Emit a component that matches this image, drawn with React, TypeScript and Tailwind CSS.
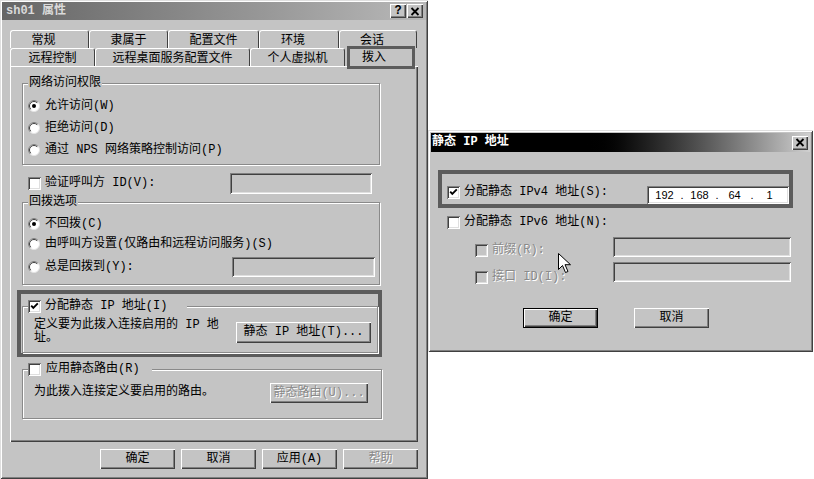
import type { ReactNode } from "react";

const FACE = "bg-[#c4c4c4]";
const RAISED =
  "shadow-[inset_1px_1px_0_#fff,inset_-1px_-1px_0_#404040,inset_-2px_-2px_0_#808080]";
const SUNKEN =
  "shadow-[inset_1px_1px_0_#808080,inset_-1px_-1px_0_#fff,inset_2px_2px_0_#404040,inset_-2px_-2px_0_#dfdfdf]";
const WINDOW =
  "shadow-[inset_1px_1px_0_#dfdfdf,inset_-1px_-1px_0_#404040,inset_2px_2px_0_#fff,inset_-2px_-2px_0_#808080]";
const DISABLED = "text-[#8a8a8a] [text-shadow:1px_1px_0_#fff]";

interface TabDef {
  label: string;
  width: string;
  short?: boolean;
}

const TOP_TABS: TabDef[] = [
  { label: "常规", width: "w-[79px]", short: true },
  { label: "隶属于", width: "w-[79px]" },
  { label: "配置文件", width: "w-[91px]" },
  { label: "环境", width: "w-[80px]", short: true },
  { label: "会话", width: "w-[78px]", short: true },
];

const FRONT_TABS: TabDef[] = [
  { label: "远程控制", width: "w-[85px]" },
  { label: "远程桌面服务配置文件", width: "w-[155px]" },
  { label: "个人虚拟机", width: "w-[95px]" },
];

function Check({ checked = false, disabled = false }: { checked?: boolean; disabled?: boolean }) {
  return (
    <span
      className={`relative block h-[13px] w-[13px] shrink-0 ${disabled ? "bg-[#c4c4c4]" : "bg-white"} ${SUNKEN}`}
    >
      {checked && (
        <svg className="absolute left-0 top-0" width="13" height="13" viewBox="0 0 13 13">
          <path d="M3.2 5.6 5.3 7.8 9.8 3.3" fill="none" stroke="#000" strokeWidth="1.9" />
        </svg>
      )}
    </span>
  );
}

function Radio({ checked = false }: { checked?: boolean }) {
  return (
    <svg className="shrink-0" width="12" height="12" viewBox="0 0 12 12">
      <circle cx="6" cy="6" r="5.5" fill="#fff" stroke="#e4e4e4" />
      <path d="M2.1 9.9A5.5 5.5 0 0 1 9.9 2.1" fill="none" stroke="#808080" />
      <path d="M2.8 9.2A4.5 4.5 0 0 1 9.2 2.8" fill="none" stroke="#404040" />
      {checked && <circle cx="6" cy="6" r="2" fill="#000" />}
    </svg>
  );
}

function Button({
  children,
  className = "",
  disabled = false,
  primary = false,
}: {
  children: ReactNode;
  className?: string;
  disabled?: boolean;
  primary?: boolean;
}) {
  return (
    <div
      className={`flex items-center justify-center ${FACE} ${RAISED} ${disabled ? DISABLED : ""} ${primary ? "border border-black" : ""} ${className}`}
    >
      {children}
    </div>
  );
}

function Field({ className = "", white = false, children }: { className?: string; white?: boolean; children?: ReactNode }) {
  return <div className={`${white ? "bg-white" : "bg-[#c4c4c4]"} ${SUNKEN} ${className}`}>{children}</div>;
}

function Group({
  legend,
  legendClass = "px-[1px]",
  className = "",
  children,
}: {
  legend: ReactNode;
  legendClass?: string;
  className?: string;
  children?: ReactNode;
}) {
  return (
    <fieldset className={`border border-[#8a8a8a] shadow-[inset_1px_1px_0_#fff,1px_1px_0_#fff] ${className}`}>
      <legend className={`ml-[5px] leading-[13px] ${FACE} ${legendClass}`}>{legend}</legend>
      {children}
    </fieldset>
  );
}

function CloseGlyph() {
  return (
    <svg width="10" height="9" viewBox="0 0 10 9">
      <path d="M1.5 1 8.5 8M8.5 1 1.5 8" stroke="#000" strokeWidth="1.8" />
    </svg>
  );
}

function Tab({ tab }: { tab: TabDef }) {
  return (
    <div
      className={`flex h-[18px] items-center justify-center rounded-t-[3px] border-l border-r border-t border-l-white border-r-[#404040] border-t-white pt-[3px] ${tab.width} ${tab.short ? "pr-[12px]" : ""}`}
    >
      {tab.label}
    </div>
  );
}

function PropertiesDialog() {
  return (
    <div className={`flex h-[479px] w-[428px] shrink-0 flex-col p-[2px] ${FACE} ${WINDOW}`}>
      <div className="flex h-[18px] items-center bg-linear-to-r from-[#666666] to-[#b8b8b8] pl-[4px] pr-[3px]">
        <span className="font-bold text-[#dadada]">sh01 属性</span>
        <div className="ml-auto flex gap-[1px]">
          <Button className="h-[14px] w-[16px] font-bold">?</Button>
          <Button className="h-[14px] w-[16px]">
            <CloseGlyph />
          </Button>
        </div>
      </div>

      <div className="pl-[8px] pt-[10px]">
        <div className="flex">
          {TOP_TABS.map((tab) => (
            <Tab key={tab.label} tab={tab} />
          ))}
        </div>
        <div className="flex">
          {FRONT_TABS.map((tab) => (
            <Tab key={tab.label} tab={tab} />
          ))}
          <div className="relative z-10 flex h-[18px] w-[70px] items-center justify-center pr-[12px] pt-[2px]">
            拨入
            <div className="absolute -bottom-[3px] -top-[2px] left-[2px] right-0 border-[3px] border-[#5c5c5c]" />
          </div>
        </div>

        <div className={`h-[376px] w-[408px] pl-[12px] pt-[11px] ${RAISED}`}>
          <Group legend="网络访问权限" className="h-[88px] w-[358px]">
            <div className="pl-[5px] pt-[5px]">
              <div className="flex h-[22px] items-center gap-[5px]">
                <Radio checked />
                允许访问(W)
              </div>
              <div className="flex h-[22px] items-center gap-[5px]">
                <Radio />
                拒绝访问(D)
              </div>
              <div className="flex h-[22px] items-center gap-[5px]">
                <Radio />
                通过 NPS 网络策略控制访问(P)
              </div>
            </div>
          </Group>

          <div className="mt-[8px] flex h-[21px] w-[358px] items-center pl-[6px] pr-[8px]">
            <Check />
            <span className="ml-[4px]">验证呼叫方 ID(V):</span>
            <Field className="ml-auto h-[21px] w-[142px]" />
          </div>

          <Group legend="回拨选项" className="mt-[2px] h-[89px] w-[358px]">
            <div className="pl-[5px] pr-[4px] pt-[5px]">
              <div className="flex h-[20px] items-center gap-[5px]">
                <Radio checked />
                不回拨(C)
              </div>
              <div className="flex h-[20px] items-center gap-[5px]">
                <Radio />
                由呼叫方设置(仅路由和远程访问服务)(S)
              </div>
              <div className="flex h-[26px] items-center gap-[5px]">
                <Radio />
                总是回拨到(Y):
                <Field className="ml-auto h-[20px] w-[143px]" />
              </div>
            </div>
          </Group>

          <div className="-ml-[5px] mt-[5px] h-[67px] w-[365px] border-[4px] border-[#5c5c5c]">
            <Group
              legend={
                <span className="flex items-center gap-[4px]">
                  <Check checked />
                  分配静态 IP 地址(I)
                </span>
              }
              legendClass="pr-[20px]"
              className="ml-[1px] mt-[6px] h-[53px] w-[356px]"
            >
              <div className="flex items-start justify-between pl-[11px] pr-[6px]">
                <p className="mt-[6px] w-[190px]">定义要为此拨入连接启用的 IP 地址。</p>
                <Button className="mt-[9px] h-[21px] w-[135px]">静态 IP 地址(T)...</Button>
              </div>
            </Group>
          </div>

          <Group
            legend={
              <span className="flex items-center gap-[5px]">
                <Check />
                应用静态路由(R)
              </span>
            }
            legendClass="pr-[12px]"
            className="mt-[6px] h-[56px] w-[360px]"
          >
            <div className="flex items-start justify-between pl-[11px] pr-[13px]">
              <p className="mt-[10px]">为此拨入连接定义要启用的路由。</p>
              <Button disabled className="mt-[7px] h-[20px] w-[98px]">
                静态路由(U)...
              </Button>
            </div>
          </Group>
        </div>

        <div className="mt-[7px] flex w-[408px] justify-end gap-[6px]">
          <Button className="h-[20px] w-[75px]">确定</Button>
          <Button className="h-[20px] w-[75px]">取消</Button>
          <Button className="h-[20px] w-[75px]">应用(A)</Button>
          <Button disabled className="h-[20px] w-[75px]">
            帮助
          </Button>
        </div>
      </div>
    </div>
  );
}

function StaticIpDialog() {
  return (
    <div className={`relative mt-[130px] flex h-[222px] w-[385px] flex-col p-[3px] ${FACE} ${WINDOW}`}>
      <div className="flex h-[19px] items-center bg-linear-to-r from-black from-40% to-[#d0d0d0] pl-[1px] pr-[2px]">
        <span className="font-bold text-white">静态 IP 地址</span>
        <Button className="ml-auto h-[14px] w-[16px]">
          <CloseGlyph />
        </Button>
      </div>

      <div className="ml-[7px] mt-[18px] flex h-[38px] w-[355px] items-start border-[4px] border-[#5c5c5c] pl-[5px]">
        <div className="mt-[12px] flex items-center gap-[4px]">
          <Check checked />
          分配静态 IPv4 地址(S):
        </div>
        <Field white className="ml-auto mt-[12px] flex h-[18px] w-[142px] items-center pl-[4px] font-['Liberation_Sans',sans-serif] text-[11px]">
          <span className="w-[27px] text-center">192</span>
          <span className="w-[8px] text-center">.</span>
          <span className="w-[27px] text-center">168</span>
          <span className="w-[8px] text-center">.</span>
          <span className="w-[27px] text-center">64</span>
          <span className="w-[8px] text-center">.</span>
          <span className="w-[27px] text-center">1</span>
        </Field>
      </div>

      <div className="ml-[16px] mt-[8px] flex h-[13px] items-center gap-[4px]">
        <Check />
        分配静态 IPv6 地址(N):
      </div>

      <div className="flex items-start pr-[19px]">
        <div className={`ml-[44px] mt-[15px] flex flex-col gap-[14px] ${DISABLED}`}>
          <div className="flex h-[13px] items-center gap-[4px]">
            <Check disabled />
            前缀(R):
          </div>
          <div className="flex h-[13px] items-center gap-[4px]">
            <Check disabled />
            接口 ID(I):
          </div>
        </div>
        <div className="ml-auto mt-[8px] flex flex-col gap-[5px]">
          <Field className="h-[20px] w-[178px]" />
          <Field className="h-[20px] w-[178px]" />
        </div>
      </div>

      <div className="ml-[92px] mt-[24px] flex gap-[36px]">
        <Button primary className="h-[20px] w-[75px]">
          确定
        </Button>
        <Button className="h-[20px] w-[75px]">取消</Button>
      </div>

      <svg className="absolute left-[130px] top-[123px]" width="13" height="21" viewBox="0 0 13 21">
        <path d="M.5.5v16l4-4 3 7 2.5-1-3-6.8h5.5z" fill="#fff" stroke="#000" strokeLinejoin="round" />
      </svg>
    </div>
  );
}

export default function App() {
  return (
    <div className="flex h-[479px] w-[814px] items-start overflow-hidden bg-white text-[12px] leading-[13px] text-black [font-family:'Liberation_Mono','Noto_Sans_CJK_SC',monospace]">
      <PropertiesDialog />
      <StaticIpDialog />
    </div>
  );
}
